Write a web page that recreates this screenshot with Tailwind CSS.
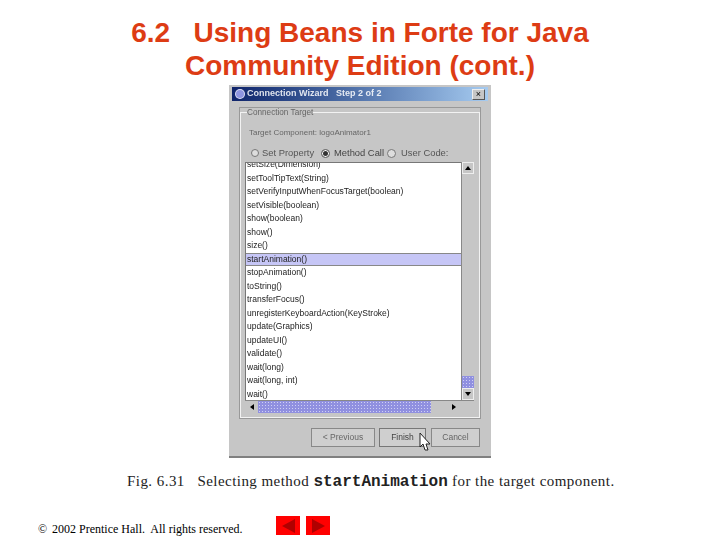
<!DOCTYPE html>
<html lang="en">
<head>
    <meta charset="UTF-8">
    <title>6.2 Using Beans in Forte for Java</title>
    <script src="https://cdn.jsdelivr.net/npm/@tailwindcss/browser@4"></script>
</head>
<body class="bg-white w-[720px] h-[540px] overflow-hidden relative font-['Liberation_Serif',serif]">
    <!-- Slide title -->
    <h1 class="pt-[16px] h-[85px] text-center text-[#dd3c14] text-[28px] leading-[33px] font-bold font-['Liberation_Sans',sans-serif] whitespace-pre">6.2   Using Beans in Forte for Java
Community Edition (cont.)</h1>

    <!-- Wizard screenshot -->
    <div class="ml-[229px] w-[262px] h-[373px] bg-[#c6c6c6] border-b-2 border-[#808080] flex flex-col px-[3px] pt-[2px] font-['Liberation_Sans',sans-serif] blur-[0.45px]">
        <div class="h-[14px] shrink-0 flex items-center justify-between px-[3px] bg-gradient-to-r from-[#10246b] to-[#a6cbf0]">
            <div class="flex items-center gap-[2px]">
                <span class="w-[10px] h-[10px] rounded-full bg-[#8f95e0] border border-white/70"></span>
                <span class="text-[9px] font-bold text-white/85 whitespace-pre">Connection Wizard   Step 2 of 2</span>
            </div>
            <span class="w-[13px] h-[11px] bg-[#c6c6c6] border border-[#eee] border-r-[#555] border-b-[#555] text-[9px] leading-[9px] text-center text-black">×</span>
        </div>

        <fieldset class="mt-[7px] ml-[8px] mr-[8px] h-[310px] border border-[#f2f2f2] outline outline-[#999] px-[6px] min-w-0 shrink-0">
            <legend class="text-[8.2px] leading-[9px] text-[#666]">Connection Target</legend>
            <p class="mt-[11px] ml-[2px] text-[8px] leading-[10px] text-[#666]">Target Component: logoAnimator1</p>
            <div class="mt-[9px] ml-[4px] h-[12px] flex items-center text-[9.4px] text-[#555]">
                <span class="w-[8px] h-[8px] rounded-full border border-[#777] bg-[#ddd]"></span>
                <span class="ml-[3px] w-[59px]">Set Property</span>
                <span class="w-[9px] h-[9px] rounded-full border border-[#777] bg-[#333] ring-1 ring-inset ring-white"></span>
                <span class="ml-[4px] w-[53px] text-[#444]">Method Call</span>
                <span class="w-[9px] h-[9px] rounded-full border border-[#777] bg-[#ddd]"></span>
                <span class="ml-[5px]">User Code:</span>
            </div>

            <!-- Method list with scrollbars -->
            <div class="mt-[3px] -ml-[2px] w-[229px] grid grid-cols-[216px_13px] grid-rows-[238px_13px]">
                <div class="bg-white border-l border-t border-[#777] overflow-hidden">
                    <ul class="-mt-[5px] text-[8.5px] leading-[13.5px] text-[#222]">
                        <li class="h-[13.5px] pl-[1px]">setSize(Dimension)</li>
                        <li class="h-[13.5px] pl-[1px]">setToolTipText(String)</li>
                        <li class="h-[13.5px] pl-[1px]">setVerifyInputWhenFocusTarget(boolean)</li>
                        <li class="h-[13.5px] pl-[1px]">setVisible(boolean)</li>
                        <li class="h-[13.5px] pl-[1px]">show(boolean)</li>
                        <li class="h-[13.5px] pl-[1px]">show()</li>
                        <li class="h-[13.5px] pl-[1px]">size()</li>
                        <li class="h-[13.5px] pl-[1px] bg-[#c6c6f6] border-y border-[#888] leading-[11.5px]">startAnimation()</li>
                        <li class="h-[13.5px] pl-[1px]">stopAnimation()</li>
                        <li class="h-[13.5px] pl-[1px]">toString()</li>
                        <li class="h-[13.5px] pl-[1px]">transferFocus()</li>
                        <li class="h-[13.5px] pl-[1px]">unregisterKeyboardAction(KeyStroke)</li>
                        <li class="h-[13.5px] pl-[1px]">update(Graphics)</li>
                        <li class="h-[13.5px] pl-[1px]">updateUI()</li>
                        <li class="h-[13.5px] pl-[1px]">validate()</li>
                        <li class="h-[13.5px] pl-[1px]">wait(long)</li>
                        <li class="h-[13.5px] pl-[1px]">wait(long, int)</li>
                        <li class="h-[13.5px] pl-[1px]">wait()</li>
                    </ul>
                </div>
                <div class="bg-[#c6c6c6] border-l border-[#888] flex flex-col justify-between">
                    <div class="h-[12px] border border-[#eee] flex items-center justify-center"><span class="border-x-[3px] border-x-transparent border-b-[4px] border-b-black"></span></div>
                    <div class="flex flex-col">
                        <div class="h-[12px] bg-[#a0a0e4] bg-[radial-gradient(#d0d0f4_1px,#9090e0_1px)] bg-[length:3px_3px]"></div>
                        <div class="h-[12px] border border-[#eee] flex items-center justify-center"><span class="border-x-[3px] border-x-transparent border-t-[4px] border-t-black"></span></div>
                    </div>
                </div>
                <div class="col-span-2 bg-[#c6c6c6] border-t border-[#888] flex items-center">
                    <div class="w-[13px] h-full flex items-center justify-center"><span class="border-y-[3px] border-y-transparent border-r-[4px] border-r-black"></span></div>
                    <div class="w-[173px] h-full bg-[#9c9ce8] bg-[radial-gradient(#d0d0f4_1px,#9090e0_1px)] bg-[length:3px_3px]"></div>
                    <div class="flex-1"></div>
                    <div class="w-[14px] h-full flex items-center justify-center"><span class="border-y-[3px] border-y-transparent border-l-[4px] border-l-black"></span></div>
                    <div class="w-[13px] h-full"></div>
                </div>
            </div>
        </fieldset>

        <!-- Wizard buttons -->
        <div class="mt-[10px] ml-[79px] flex gap-[4px] text-[8.5px] text-[#444]">
            <button class="w-[64px] h-[19px] bg-[#cfcfcf] border border-[#888] text-[#666]">&lt; Previous</button>
            <button class="w-[47px] h-[19px] bg-[#cfcfcf] border border-[#777]">Finish</button>
            <button class="w-[49px] h-[19px] bg-[#cfcfcf] border border-[#888] text-[#666] ml-[1px]">Cancel</button>
        </div>
    </div>

    <!-- Caption -->
    <p class="ml-[127px] mt-[13px] h-[20px] text-[15px] leading-[20px] text-[#222] tracking-[0.45px] whitespace-pre">Fig. 6.31   Selecting method <span class="font-bold font-['Liberation_Mono',monospace] text-[16px] tracking-normal">startAnimation</span> for the target component.</p>

    <!-- Footer -->
    <div class="ml-[38px] mt-[25px] flex items-start text-black">
        <span class="w-[14px] pt-[5px] text-[12px] leading-[16px]">©</span>
        <span class="pt-[5px] text-[12px] leading-[16px] w-[224px] whitespace-pre">2002 Prentice Hall.  All rights reserved.</span>
        <div class="flex gap-[6px]">
            <div class="w-[24px] h-[19px] bg-[#ff0000] flex items-center justify-center"><span class="border-y-[7px] border-y-transparent border-r-[13px] border-r-[#b00000]"></span></div>
            <div class="w-[24px] h-[19px] bg-[#ff0000] flex items-center justify-center"><span class="border-y-[7px] border-y-transparent border-l-[13px] border-l-[#b00000]"></span></div>
        </div>
    </div>

    <!-- Mouse pointer over the Finish button -->
    <svg class="absolute left-[419px] top-[432px]" width="12" height="20" viewBox="0 0 12 20"><path d="M1 1v14l3-3 2 6h3l-2-6h4z" fill="#fff" stroke="#222" stroke-width="1"/></svg>
</body>
</html>
